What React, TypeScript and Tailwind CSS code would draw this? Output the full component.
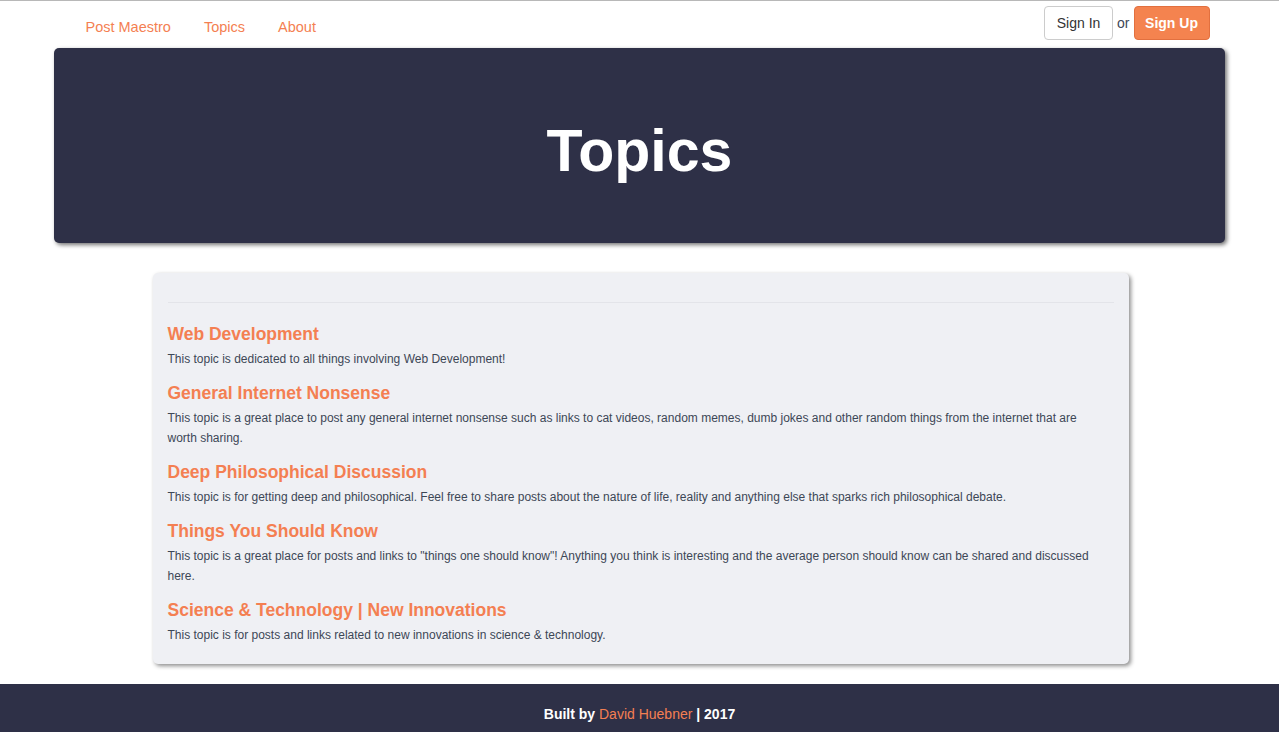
import React from "react";

const topics = [
  {
    title: "Web Development",
    desc: "This topic is dedicated to all things involving Web Development!",
  },
  {
    title: "General Internet Nonsense",
    desc: "This topic is a great place to post any general internet nonsense such as links to cat videos, random memes, dumb jokes and other random things from the internet that are worth sharing.",
  },
  {
    title: "Deep Philosophical Discussion",
    desc: "This topic is for getting deep and philosophical. Feel free to share posts about the nature of life, reality and anything else that sparks rich philosophical debate.",
  },
  {
    title: "Things You Should Know",
    desc: 'This topic is a great place for posts and links to "things one should know"! Anything you think is interesting and the average person should know can be shared and discussed here.',
  },
  {
    title: "Science & Technology | New Innovations",
    desc: "This topic is for posts and links related to new innovations in science & technology.",
  },
];

export default function App() {
  return (
    <div
      className="min-h-screen bg-white border-t border-[#b8b8b8]"
      style={{ fontFamily: '"Liberation Sans", Arial, Helvetica, sans-serif' }}
    >
      {/* Nav */}
      <nav className="w-[1170px] mx-auto h-[47px] flex items-start justify-between px-[15px]">
        <div className="flex items-center gap-[33px] pl-[16px] pt-[17px] leading-[18px] text-[14.5px] text-[#f47f52]">
          <a href="#">Post Maestro</a>
          <a href="#">Topics</a>
          <a href="#">About</a>
        </div>
        <div className="flex items-center gap-[4px] pt-[5px] text-[14px]">
          <button className="h-[34px] w-[69px] border border-[#cccccc] rounded-[4px] bg-white text-[#333]">
            Sign In
          </button>
          <span className="text-[#3d4756]">or</span>
          <button className="h-[34px] w-[76px] border border-[#e2703f] rounded-[4px] bg-[#f4834f] text-white font-bold">
            Sign Up
          </button>
        </div>
      </nav>

      {/* Hero */}
      <header className="w-[1171px] mx-auto h-[195px] bg-[#2e3047] rounded-[5px] shadow-[2px_2px_4px_rgba(0,0,0,0.55)] flex items-center justify-center">
        <h1 className="text-[59px] leading-none text-white font-bold mt-[11px]">Topics</h1>
      </header>

      {/* Card */}
      <main className="w-[976px] mx-auto mt-[30px] translate-x-[1px] bg-[#eff0f4] rounded-[5px] shadow-[2px_2px_4px_rgba(0,0,0,0.45)] pl-[15px] pr-[15px] pt-[29px] pb-[19px]">
        <div className="border-t border-[#e3e4e9]" />
        <div className="pt-[21px] pr-[14px] flex flex-col gap-[14px]">
          {topics.map((t) => (
            <div key={t.title}>
              <h4 className="text-[17.5px] leading-[20px] font-bold text-[#f47f52]">
                <a href="#">{t.title}</a>
              </h4>
              <p className="mt-[5px] text-[12px] leading-[20px] text-[#3d4756]">{t.desc}</p>
            </div>
          ))}
        </div>
      </main>

      {/* Footer */}
      <footer className="mt-[20px] bg-[#2e3047] h-[60px] flex items-center justify-center">
        <p className="text-[14px] font-bold text-white">
          Built by <a href="#" className="font-normal text-[#f47f52]">David Huebner</a> | 2017
        </p>
      </footer>
    </div>
  );
}
